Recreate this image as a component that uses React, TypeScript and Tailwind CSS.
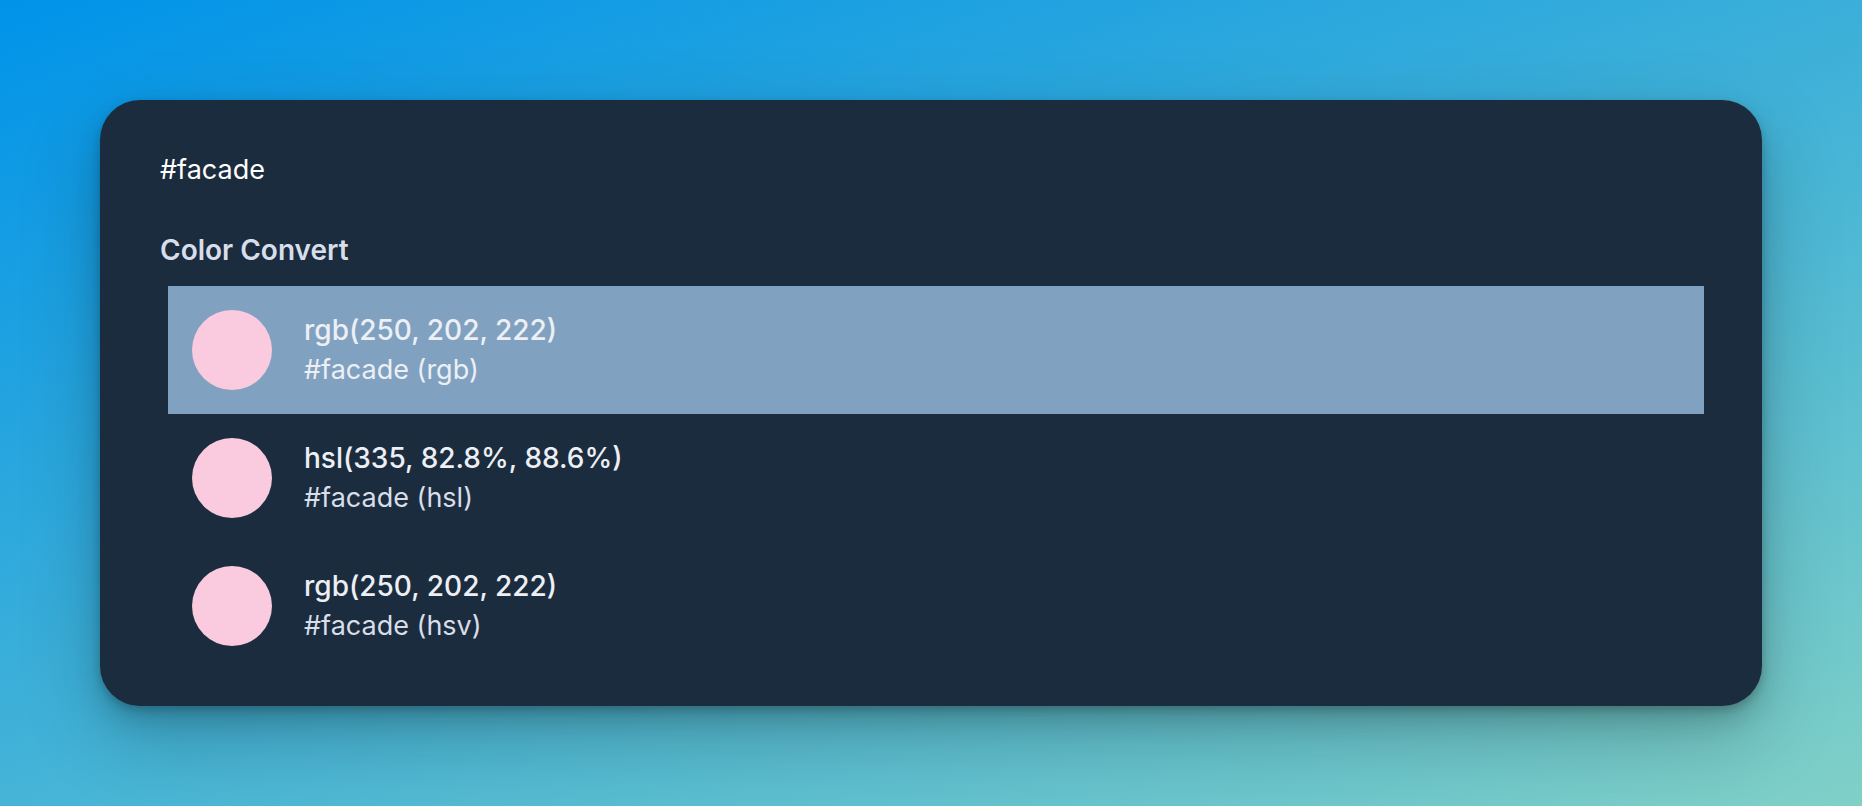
import { useState } from "react";

type Conversion = { value: string; label: string };

const conversions: Conversion[] = [
  { value: "rgb(250, 202, 222)", label: "#facade (rgb)" },
  { value: "hsl(335, 82.8%, 88.6%)", label: "#facade (hsl)" },
  { value: "rgb(250, 202, 222)", label: "#facade (hsv)" },
];

export default function App() {
  const [query, setQuery] = useState("#facade");
  const [selected, setSelected] = useState(0);

  return (
    <div className="flex min-h-screen flex-col bg-[linear-gradient(160deg,#0093e9_0%,#80d0c7_100%)] p-[100px] font-['Inter',sans-serif] text-[28px] leading-10">
      <main className="rounded-[40px] bg-[#1b2c3e] pt-[50px] pr-[58px] pb-9 pl-[60px] shadow-[0_4px_8px_rgba(0,0,0,0.18),0_14px_26px_rgba(0,0,0,0.15),0_30px_80px_rgba(0,0,0,0.22)]">
        <input
          aria-label="Search"
          value={query}
          onChange={(e) => setQuery(e.target.value)}
          className="block h-10 w-full bg-transparent text-[27px] text-white outline-none"
        />
        <h2 className="mt-10 font-semibold text-[#d8dee9]">Color Convert</h2>
        <ul className="mt-4 ml-2">
          {conversions.map((item, index) => (
            <li key={item.label}>
              <button
                type="button"
                onClick={() => setSelected(index)}
                className={`flex w-full items-center gap-8 p-6 text-left ${
                  index === selected ? "bg-[#81a1c1] text-[#eceff4]" : "text-[#d8dee9]"
                }`}
              >
                <span className="size-20 shrink-0 rounded-full bg-[#facade]" />
                <span className="flex flex-col">
                  <span className="font-medium text-[#eceff4]">{item.value}</span>
                  <span className="text-[27px]">{item.label}</span>
                </span>
              </button>
            </li>
          ))}
        </ul>
      </main>
    </div>
  );
}
